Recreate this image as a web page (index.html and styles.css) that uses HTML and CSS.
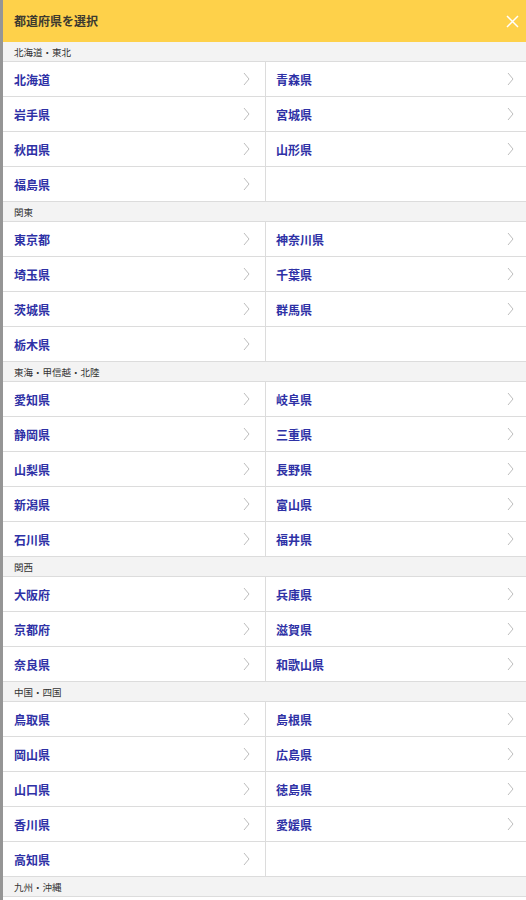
FILE: index.html
```html
<!DOCTYPE html>
<html lang="ja">
<head>
<meta charset="utf-8">
<link rel="stylesheet" href="styles.css">
</head>
<body>
<div class="modal">
  <header class="bar">
    <h1 class="title">都道府県を選択</h1>
    <button class="close" aria-label="閉じる">
      <svg width="13" height="13" viewBox="0 0 13 13"><path d="M1 1L12 12M12 1L1 12" stroke="#fff" stroke-width="1.5" fill="none"/></svg>
    </button>
  </header>

  <div class="section">北海道・東北</div>
  <div class="grid">
    <a class="cell">北海道<svg class="chev" viewBox="0 0 7 14"><path d="M1 1L6 7L1 13"/></svg></a><a class="cell">青森県<svg class="chev" viewBox="0 0 7 14"><path d="M1 1L6 7L1 13"/></svg></a>
    <a class="cell">岩手県<svg class="chev" viewBox="0 0 7 14"><path d="M1 1L6 7L1 13"/></svg></a><a class="cell">宮城県<svg class="chev" viewBox="0 0 7 14"><path d="M1 1L6 7L1 13"/></svg></a>
    <a class="cell">秋田県<svg class="chev" viewBox="0 0 7 14"><path d="M1 1L6 7L1 13"/></svg></a><a class="cell">山形県<svg class="chev" viewBox="0 0 7 14"><path d="M1 1L6 7L1 13"/></svg></a>
    <a class="cell">福島県<svg class="chev" viewBox="0 0 7 14"><path d="M1 1L6 7L1 13"/></svg></a><span class="cell empty"></span>
  </div>

  <div class="section">関東</div>
  <div class="grid">
    <a class="cell">東京都<svg class="chev" viewBox="0 0 7 14"><path d="M1 1L6 7L1 13"/></svg></a><a class="cell">神奈川県<svg class="chev" viewBox="0 0 7 14"><path d="M1 1L6 7L1 13"/></svg></a>
    <a class="cell">埼玉県<svg class="chev" viewBox="0 0 7 14"><path d="M1 1L6 7L1 13"/></svg></a><a class="cell">千葉県<svg class="chev" viewBox="0 0 7 14"><path d="M1 1L6 7L1 13"/></svg></a>
    <a class="cell">茨城県<svg class="chev" viewBox="0 0 7 14"><path d="M1 1L6 7L1 13"/></svg></a><a class="cell">群馬県<svg class="chev" viewBox="0 0 7 14"><path d="M1 1L6 7L1 13"/></svg></a>
    <a class="cell">栃木県<svg class="chev" viewBox="0 0 7 14"><path d="M1 1L6 7L1 13"/></svg></a><span class="cell empty"></span>
  </div>

  <div class="section">東海・甲信越・北陸</div>
  <div class="grid">
    <a class="cell">愛知県<svg class="chev" viewBox="0 0 7 14"><path d="M1 1L6 7L1 13"/></svg></a><a class="cell">岐阜県<svg class="chev" viewBox="0 0 7 14"><path d="M1 1L6 7L1 13"/></svg></a>
    <a class="cell">静岡県<svg class="chev" viewBox="0 0 7 14"><path d="M1 1L6 7L1 13"/></svg></a><a class="cell">三重県<svg class="chev" viewBox="0 0 7 14"><path d="M1 1L6 7L1 13"/></svg></a>
    <a class="cell">山梨県<svg class="chev" viewBox="0 0 7 14"><path d="M1 1L6 7L1 13"/></svg></a><a class="cell">長野県<svg class="chev" viewBox="0 0 7 14"><path d="M1 1L6 7L1 13"/></svg></a>
    <a class="cell">新潟県<svg class="chev" viewBox="0 0 7 14"><path d="M1 1L6 7L1 13"/></svg></a><a class="cell">富山県<svg class="chev" viewBox="0 0 7 14"><path d="M1 1L6 7L1 13"/></svg></a>
    <a class="cell">石川県<svg class="chev" viewBox="0 0 7 14"><path d="M1 1L6 7L1 13"/></svg></a><a class="cell">福井県<svg class="chev" viewBox="0 0 7 14"><path d="M1 1L6 7L1 13"/></svg></a>
  </div>

  <div class="section">関西</div>
  <div class="grid">
    <a class="cell">大阪府<svg class="chev" viewBox="0 0 7 14"><path d="M1 1L6 7L1 13"/></svg></a><a class="cell">兵庫県<svg class="chev" viewBox="0 0 7 14"><path d="M1 1L6 7L1 13"/></svg></a>
    <a class="cell">京都府<svg class="chev" viewBox="0 0 7 14"><path d="M1 1L6 7L1 13"/></svg></a><a class="cell">滋賀県<svg class="chev" viewBox="0 0 7 14"><path d="M1 1L6 7L1 13"/></svg></a>
    <a class="cell">奈良県<svg class="chev" viewBox="0 0 7 14"><path d="M1 1L6 7L1 13"/></svg></a><a class="cell">和歌山県<svg class="chev" viewBox="0 0 7 14"><path d="M1 1L6 7L1 13"/></svg></a>
  </div>

  <div class="section">中国・四国</div>
  <div class="grid">
    <a class="cell">鳥取県<svg class="chev" viewBox="0 0 7 14"><path d="M1 1L6 7L1 13"/></svg></a><a class="cell">島根県<svg class="chev" viewBox="0 0 7 14"><path d="M1 1L6 7L1 13"/></svg></a>
    <a class="cell">岡山県<svg class="chev" viewBox="0 0 7 14"><path d="M1 1L6 7L1 13"/></svg></a><a class="cell">広島県<svg class="chev" viewBox="0 0 7 14"><path d="M1 1L6 7L1 13"/></svg></a>
    <a class="cell">山口県<svg class="chev" viewBox="0 0 7 14"><path d="M1 1L6 7L1 13"/></svg></a><a class="cell">徳島県<svg class="chev" viewBox="0 0 7 14"><path d="M1 1L6 7L1 13"/></svg></a>
    <a class="cell">香川県<svg class="chev" viewBox="0 0 7 14"><path d="M1 1L6 7L1 13"/></svg></a><a class="cell">愛媛県<svg class="chev" viewBox="0 0 7 14"><path d="M1 1L6 7L1 13"/></svg></a>
    <a class="cell">高知県<svg class="chev" viewBox="0 0 7 14"><path d="M1 1L6 7L1 13"/></svg></a><span class="cell empty"></span>
  </div>

  <div class="section">九州・沖縄</div>
</div>
</body>
</html>
```

FILE: styles.css
```css
* { box-sizing: border-box; }
html, body {
  margin: 0;
  padding: 0;
  background: #fff;
  height: 900px;
  overflow: hidden;
}
body {
  font-family: "Noto Sans CJK JP", "Noto Sans", sans-serif;
  border-left: 3px solid #959595;
}
.modal {
  display: flex;
  flex-direction: column;
}
.bar {
  height: 42px;
  background: #fed14a;
  display: flex;
  align-items: center;
  justify-content: space-between;
  padding: 0 7px 0 11px;
}
.title {
  margin: 0;
  font-size: 12px;
  font-weight: 700;
  color: #3d3a30;
  line-height: 1;
}
.close {
  border: 0;
  background: none;
  padding: 0;
  width: 14px;
  height: 14px;
  display: flex;
  align-items: center;
  justify-content: center;
}
.section {
  height: 20px;
  background: #f3f3f3;
  border-bottom: 1px solid #dcdcdc;
  font-size: 9.5px;
  color: #333;
  padding-left: 11px;
  display: flex;
  align-items: center;
}
.grid {
  display: grid;
  grid-template-columns: 263px 1fr;
}
.cell {
  height: 35px;
  border-bottom: 1px solid #dcdcdc;
  display: flex;
  align-items: center;
  justify-content: space-between;
  padding: 0 17px 0 11px;
  font-size: 12px;
  font-weight: 700;
  color: #2e31a6;
  text-decoration: none;
}
.cell:nth-child(odd) {
  border-right: 1px solid #dcdcdc;
  padding-right: 15px;
}
.cell:nth-child(even) {
  padding-left: 10px;
  padding-right: 12px;
}
.chev {
  width: 7px;
  height: 14px;
  fill: none;
  stroke: #bdbdbd;
  stroke-width: 1;
}
```
